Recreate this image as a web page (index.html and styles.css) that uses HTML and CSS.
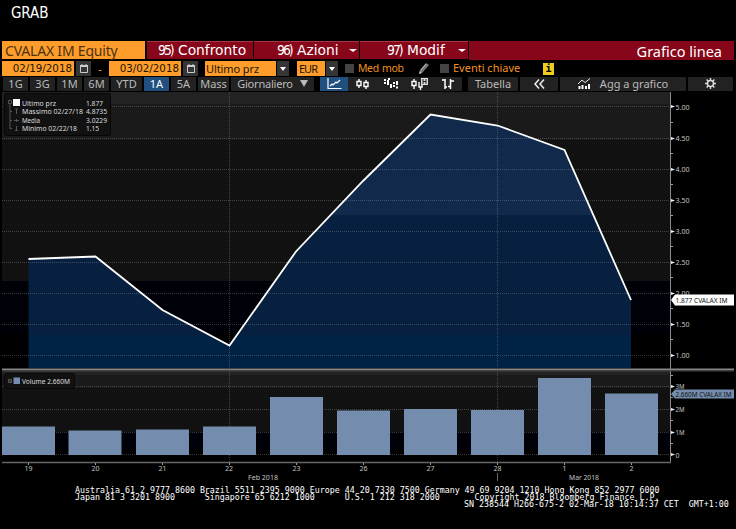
FILE: index.html
```html
<!DOCTYPE html>
<html lang="it">
<head>
  <meta charset="UTF-8" />
  <title>CVALAX IM Equity - Grafico linea</title>
  <link rel="stylesheet" href="styles.css">
</head>
<body>

  <header class="command">GRAB</header>

  <div class="menu-row">
    <div class="security">CVALAX IM Equity</div>
    <div class="menu confronto"><span class="num">95)</span><span>Confronto</span></div>
    <div class="menu azioni"><span class="num">96)</span><span>Azioni</span><i class="caret"></i></div>
    <div class="menu modif"><span class="num">97)</span><span>Modif</span><i class="caret"></i></div>
    <div class="page-title">Grafico linea</div>
  </div>

  <div class="filter-row">
    <div class="field date">02/19/2018</div>
    <div class="cal"><svg width="8" height="9" viewBox="0 0 8 9"><path d="M.5 2.5h7v6h-7zM2 0v2M6 0v2" fill="none" stroke="#ccc"/><path d="M0 1h8v2H0z" fill="#ccc"/></svg></div>
    <div class="dash">-</div>
    <div class="field date">03/02/2018</div>
    <div class="cal"><svg width="8" height="9" viewBox="0 0 8 9"><path d="M.5 2.5h7v6h-7zM2 0v2M6 0v2" fill="none" stroke="#ccc"/><path d="M0 1h8v2H0z" fill="#ccc"/></svg></div>
    <div class="field price">Ultimo prz</div>
    <div class="drop"><i class="caret"></i></div>
    <div class="field currency">EUR</div>
    <div class="drop"><i class="caret"></i></div>
    <i class="check"></i>
    <span class="check-label med">Med mob</span>
    <svg class="pencil" width="12" height="13" viewBox="0 0 12 13"><path d="M1 12l1-4 6-7 3 2-6 7z" fill="#777"/><path d="M3 8l5-6" stroke="#bbb"/><path d="M1 12l1-3 2 2z" fill="#ccc"/></svg>
    <i class="check"></i>
    <span class="check-label eventi">Eventi chiave</span>
    <span class="info">i</span>
  </div>

  <div class="range-row">
    <div class="range">1G</div>
    <div class="range">3G</div>
    <div class="range">1M</div>
    <div class="range">6M</div>
    <div class="range ytd">YTD</div>
    <div class="range active">1A</div>
    <div class="range">5A</div>
    <div class="range mass">Mass</div>
    <div class="range daily"><span>Giornaliero</span><i class="caret"></i></div>
    <div class="chart-types">
      <div class="type active"><svg width="15" height="12" viewBox="0 0 15 12"><path d="M1 0v10.500h13.500M3 8l2-2 1 1 3-3 1 1 3-3" fill="none" stroke="#fff" stroke-width="1.200"/></svg></div>
      <div class="type"><svg width="13" height="12" viewBox="0 0 13 12"><path d="M3 1v2M3 8v2M10 2v2M10 9v2M1 3.500h4v4H1zM8 4.500h4v4H8z" fill="none" stroke="#fff" stroke-width="1.400"/></svg></div>
      <div class="type"><svg width="16" height="12" viewBox="0 0 16 12"><path d="M5 2v5M8 6v4M14 3v4" stroke="#fff" stroke-width="2"/><path d="M1 2h2M1 5h2M5 1h2M10 5h2M10 8h2M13 9.500h2" stroke="#fff" stroke-width="2"/></svg></div>
      <div class="type"><svg width="17" height="12" viewBox="0 0 17 12"><path d="M3 1v2M3 8v3M1 3.500h4v4H1zM8 4v5h3V7M9.500 9v3" fill="none" stroke="#fff" stroke-width="1.400"/><path d="M10 0h7v7h-7z" fill="#ddd"/><path d="M12 1v5M15 1v5M12 3.500h3" stroke="#222"/></svg></div>
      <div class="type"><svg width="13" height="12" viewBox="0 0 13 12"><path d="M4 1v10M9.500 1v10M1 2h3M4 9h2M7 8.500h2M10 3h3" fill="none" stroke="#fff" stroke-width="1.500"/></svg></div>
    </div>
    <div class="range table">Tabella</div>
    <div class="range back"><svg width="11" height="10" viewBox="0 0 11 10"><path d="M5 .500L1 5l4 4.500M10 .500L6 5l4 4.500" fill="none" stroke="#eee" stroke-width="1.500"/></svg></div>
    <div class="range add"><svg width="13" height="11" viewBox="0 0 13 11"><path d="M0 6l4-4 3 2.500L12 .500" fill="none" stroke="#eee"/><path d="M1.500 8v3M4.500 7v4M8 8v3M11 6v5" stroke="#fff" stroke-width="2"/></svg><span>Agg a grafico</span></div>
    <div class="range gear"><svg width="11" height="11" viewBox="0 0 11 11"><circle cx="5.500" cy="5.500" r="3" fill="none" stroke="#ddd" stroke-width="1.500"/><path d="M5.500 0v2M5.500 9v2M0 5.500h2M9 5.500h2M1.600 1.600l1.400 1.400M8 8l1.400 1.400M9.400 1.600L8 3M3 8L1.600 9.400" stroke="#ddd" stroke-width="1.400"/></svg></div>
  </div>

  <svg class="chart" width="736" height="391" viewBox="0 92 736 391">
    <defs>
      <clipPath id="under-line"><path d="M28.500 368V259L95.500 256.500 162.500 310 229.500 345.500 296 251.500 363 181 430.500 114.500 497.500 125.500 564.500 150 631 300V368z"/></clipPath>
    </defs>

    <!-- price panel -->
    <rect x="2" y="92" width="668" height="12" fill="#222"/>
    <rect x="2" y="104" width="668" height="36" fill="#1a1a1a"/>
    <rect x="2" y="140" width="668" height="141" fill="#111"/>
    <rect x="2" y="281" width="668" height="52" fill="#000008"/>
    <g clip-path="url(#under-line)">
      <rect x="28" y="92" width="604" height="123" fill="#11294a"/>
      <rect x="28" y="215" width="604" height="120" fill="#07203f"/>
      <rect x="28" y="335" width="604" height="33" fill="#002244"/>
    </g>
    <path class="grid" d="M2 106.500H670M2 138.500H670M2 169.500H670M2 200.500H670M2 231.500H670M2 262.500H670M2 293.500H670M2 324.500H670M2 355.500H670M229.500 92V368M497.500 92V368"/>
    <polyline class="price-line" points="28.500,259 95.500,256.500 162.500,310 229.500,345.500 296,251.500 363,181 430.500,114.500 497.500,125.500 564.500,150 631,300"/>

    <!-- volume panel -->
    <rect x="2" y="371" width="668" height="4" fill="#222"/>
    <rect x="2" y="375" width="668" height="13" fill="#1a1a1a"/>
    <rect x="2" y="388" width="668" height="44" fill="#111"/>
    <rect x="2" y="432" width="668" height="17" fill="#000008"/>
    <path class="grid" d="M2 386.500H670M2 409.500H670M2 432.500H670M2 454.500H670M229.500 371V463M497.500 371V463"/>
    <g class="bars">
      <rect x="2" y="426.500" width="53" height="28.500"/>
      <rect x="68.500" y="430.500" width="53" height="24.500"/>
      <rect x="136" y="429.500" width="53" height="25.500"/>
      <rect x="203" y="426.500" width="53" height="28.500"/>
      <rect x="270" y="397" width="53" height="58"/>
      <rect x="337" y="410.500" width="53" height="44.500"/>
      <rect x="404" y="409" width="53" height="46"/>
      <rect x="471" y="410" width="53" height="45"/>
      <rect x="538" y="378" width="53" height="77"/>
      <rect x="605" y="393.500" width="53" height="61.500"/>
    </g>

    <!-- axes -->
    <path d="M670.500 92V463" stroke="#8a8a8a"/>
    <path d="M2 369.500H734" stroke="#85858a" stroke-width="2"/>
    <path d="M2 371H734" stroke="#444"/>
    <path d="M2 462.500H671" stroke="#666" stroke-width="1.500"/>
    <path class="tick" d="M671 122.500h2M671 153.500h2M671 184.500h2M671 215.500h2M671 246.500h2M671 277.500h2M671 308.500h2M671 339.500h2M671 375.500h2M671 397.500h2M671 420.500h2M671 443.500h2"/>
    <path class="tick" d="M28.500 463v2M95.500 463v2M162.500 463v2M229.500 463v2M296.500 463v2M363.500 463v2M430.500 463v2M497.500 463v2M564.500 463v2M631.500 463v2"/>
    <path d="M497.500 473V481" stroke="#666"/>
    <path fill="#eee" d="M671 105l4 1.500-4 1.500zM671 137l4 1.500-4 1.500zM671 168l4 1.500-4 1.500zM671 199l4 1.500-4 1.500zM671 230l4 1.500-4 1.500zM671 261l4 1.500-4 1.500zM671 292l4 1.500-4 1.500zM671 323l4 1.500-4 1.500zM671 354l4 1.500-4 1.500zM671 385l4 1.500-4 1.500zM671 408l4 1.500-4 1.500zM671 431l4 1.500-4 1.500zM671 453l4 1.500-4 1.500z"/>
    <g class="axis-text">
      <text x="675.500" y="109.500" textLength="14" lengthAdjust="spacingAndGlyphs">5.00</text>
      <text x="675.500" y="141" textLength="14" lengthAdjust="spacingAndGlyphs">4.50</text>
      <text x="675.500" y="172" textLength="14" lengthAdjust="spacingAndGlyphs">4.00</text>
      <text x="675.500" y="203" textLength="14" lengthAdjust="spacingAndGlyphs">3.50</text>
      <text x="675.500" y="234" textLength="14" lengthAdjust="spacingAndGlyphs">3.00</text>
      <text x="675.500" y="265" textLength="14" lengthAdjust="spacingAndGlyphs">2.50</text>
      <text x="675.500" y="296" textLength="14" lengthAdjust="spacingAndGlyphs">2.00</text>
      <text x="675.500" y="327" textLength="14" lengthAdjust="spacingAndGlyphs">1.50</text>
      <text x="675.500" y="358" textLength="14" lengthAdjust="spacingAndGlyphs">1.00</text>
      <text x="675.500" y="389" textLength="9" lengthAdjust="spacingAndGlyphs">3M</text>
      <text x="675.500" y="412" textLength="9" lengthAdjust="spacingAndGlyphs">2M</text>
      <text x="675.500" y="435" textLength="9" lengthAdjust="spacingAndGlyphs">1M</text>
      <text x="675.500" y="457.500">0</text>
    </g>
    <g class="axis-text days">
      <text x="28.500" y="471">19</text>
      <text x="95.500" y="471">20</text>
      <text x="162.500" y="471">21</text>
      <text x="229" y="471">22</text>
      <text x="296.500" y="471">23</text>
      <text x="363.500" y="471">26</text>
      <text x="430.500" y="471">27</text>
      <text x="497.500" y="471">28</text>
      <text x="564.500" y="471">1</text>
      <text x="631.500" y="471">2</text>
      <text x="263" y="479.500" textLength="30" lengthAdjust="spacingAndGlyphs">Feb 2018</text>
      <text x="584" y="479.500" textLength="30" lengthAdjust="spacingAndGlyphs">Mar 2018</text>
    </g>

    <!-- last value flags -->
    <path d="M671 300l4-5.500h59v11h-59z" fill="#fff"/>
    <text class="flag" x="675.500" y="302.500" textLength="52" lengthAdjust="spacingAndGlyphs">1.877 CVALAX IM</text>
    <path d="M671 394l4-4.500h59v9h-59z" fill="#748dae"/>
    <text class="flag" x="675.500" y="396.500" textLength="56" lengthAdjust="spacingAndGlyphs">2.660M CVALAX IM</text>

    <!-- legends -->
    <rect x="4.500" y="93.500" width="106" height="42" rx="2" fill="#111" stroke="#060606"/>
    <path d="M8.500 100.500h3v3h-3zM10 104v24.500h2M10 111.500h2M10 120.500h2M15 109h3M16.500 109v5M14 120.500h5M16.500 119v3M16.500 126v5M15 130.500h3" fill="none" stroke="#555"/>
    <rect x="13" y="99" width="7" height="7" fill="#fff"/>
    <g class="legend">
      <text x="22" y="105.500" textLength="34" lengthAdjust="spacingAndGlyphs">Ultimo prz</text>
      <text x="22" y="114" textLength="61" lengthAdjust="spacingAndGlyphs">Massimo 02/27/18</text>
      <text x="22" y="122.500" textLength="18" lengthAdjust="spacingAndGlyphs">Media</text>
      <text x="22" y="131" textLength="55" lengthAdjust="spacingAndGlyphs">Minimo 02/22/18</text>
      <text x="86" y="105.500" textLength="17" lengthAdjust="spacingAndGlyphs">1.877</text>
      <text x="86" y="114" textLength="21" lengthAdjust="spacingAndGlyphs">4.8735</text>
      <text x="86" y="122.500" textLength="21" lengthAdjust="spacingAndGlyphs">3.0229</text>
      <text x="86" y="131" textLength="13" lengthAdjust="spacingAndGlyphs">1.15</text>
    </g>
    <rect x="4.500" y="373.500" width="70" height="15" rx="2" fill="#111" stroke="#080808"/>
    <path d="M8.500 379.500h3v3h-3z" fill="#333" stroke="#555"/>
    <rect x="13.500" y="377.500" width="6.500" height="6.500" fill="#748dae"/>
    <g class="legend">
      <text x="22" y="384" textLength="48" lengthAdjust="spacingAndGlyphs">Volume 2.660M</text>
    </g>
  </svg>

<pre class="footer">Australia 61 2 9777 8600 Brazil 5511 2395 9000 Europe 44 20 7330 7500 Germany 49 69 9204 1210 Hong Kong 852 2977 6000
Japan 81 3 3201 8900      Singapore 65 6212 1000      U.S. 1 212 318 2000       Copyright 2018 Bloomberg Finance L.P.
<span class="serial">SN 238544 H266-675-2 02-Mar-18 10:14:37 CET  GMT+1:00</span></pre>

</body>
</html>
```
FILE: styles.css
```css
* {
  box-sizing: border-box;
}

body {
  margin: 0;
  width: 736px;
  height: 529px;
  overflow: hidden;
  background: #000;
  color: #fff;
  font-family: "Noto Sans", "Open Sans", sans-serif;
  white-space: nowrap;
}

svg {
  display: block;
  flex: none;
}

.command {
  height: 41px;
  padding: 2px 0 0 11px;
  font-family: "DejaVu Sans Condensed", "DejaVu Sans", sans-serif;
  font-size: 15px;
  font-stretch: condensed;
  line-height: 22px;
  letter-spacing: -0.1px;
}

.menu-row {
  display: flex;
  gap: 1px;
  height: 19px;
  padding-left: 2px;
  line-height: 18px;
}

.security {
  width: 143px;
  height: 18px;
  margin-right: 1px;
  padding: 1px 0 0 3px;
  background: #ff9d2c;
  color: #4a3210;
  font-size: 14px;
  letter-spacing: -0.2px;
}

.menu {
  display: flex;
  align-items: center;
  width: 106px;
  height: 18px;
  padding-left: 11px;
  background: #870619;
  border-top: 1px solid #a83444;
  font-family: "DejaVu Sans", sans-serif;
  font-size: 13.8px;
}

.menu > span {
  margin-top: -2px;
}

.menu.azioni {
  width: 105px;
  padding-left: 23px;
}

.menu.modif {
  width: 108px;
  padding-left: 27px;
}

.num {
  width: 20px;
  font-family: "DejaVu Sans Condensed", sans-serif;
  letter-spacing: -2px;
}

.caret {
  border: 4px solid transparent;
  border-top-color: #fff;
  border-bottom: 0;
}

.menu .caret {
  margin: 0 2px 0 auto;
  border-top-width: 3px;
}

.page-title {
  flex: 1;
  height: 19px;
  margin-right: 2px;
  padding: 1px 12px 0 0;
  background: #870619;
  font-size: 14.5px;
  text-align: right;
}

.filter-row {
  display: flex;
  align-items: center;
  height: 17px;
  padding-left: 2px;
  font-size: 11px;
}

.field {
  height: 15px;
  background: #ff9d2c;
  color: #241500;
  line-height: 15px;
}

.date {
  width: 72px;
  padding-right: 2px;
  font-family: "DejaVu Sans", sans-serif;
  font-size: 10.3px;
  text-align: right;
}

.cal {
  display: flex;
  align-items: center;
  justify-content: center;
  width: 15px;
  height: 15px;
  margin-left: 2px;
  background: #353535;
}

.dash {
  width: 18px;
  text-align: center;
  color: #ff9d2c;
}

.price {
  width: 71px;
  margin-left: 7px;
  padding-left: 1px;
  letter-spacing: -0.1px;
}

.currency {
  width: 28px;
  margin-left: 8px;
  padding-left: 2px;
  letter-spacing: -1px;
}

.drop {
  display: flex;
  align-items: center;
  justify-content: center;
  width: 12px;
  height: 15px;
  margin-left: 1px;
  background: #353535;
}

.drop .caret {
  border-width: 4px 3px 0;
}

.check {
  width: 9px;
  height: 9px;
  margin-left: 7px;
  background: #444;
}

.check-label {
  margin: -2px 0 0 4px;
  color: #f29022;
}

.med {
  width: 60px;
  font-size: 10.5px;
  letter-spacing: -0.4px;
  word-spacing: 1px;
}

.pencil {
  margin-right: 3px;
}

.eventi {
  width: 90px;
}

.info {
  width: 11px;
  height: 12px;
  background: #f0cc20;
  color: #000;
  font: bold 10px/12px "DejaVu Sans Mono", monospace;
  text-align: center;
}

.range-row {
  display: flex;
  gap: 2px;
  height: 15px;
  padding-left: 3px;
  color: #bbb;
  font-size: 11px;
  line-height: 12px;
}

.range {
  display: flex;
  align-items: center;
  justify-content: center;
  width: 25px;
  height: 14px;
  padding-bottom: 1px;
  background: #222;
}

.range.active,
.type.active {
  background: #205080;
  color: #fff;
}

.ytd {
  width: 31px;
}

.mass {
  width: 31px;
}

.daily {
  width: 83px;
  letter-spacing: -0.2px;
}

.daily .caret {
  margin-left: 7px;
  border-width: 7px 4px 0;
  border-top-color: #bbb;
}

.chart-types {
  display: flex;
  width: 142px;
  height: 14px;
  margin-left: 4px;
  background: #222;
}

.type {
  display: flex;
  flex: 1;
  align-items: center;
  justify-content: center;
}

.table {
  width: 50px;
  margin-left: 4px;
}

.back {
  width: 38px;
}

.add {
  width: 126px;
}

.add span {
  margin-left: 9px;
}

.gear {
  width: 45px;
}

.grid {
  fill: none;
  stroke: #aaa;
  stroke-opacity: 0.32;
  stroke-dasharray: 1 1;
}

.price-line {
  fill: none;
  stroke: #fff;
  stroke-width: 1.8;
}

.bars rect {
  fill: #748dae;
}

.tick {
  stroke: #999;
}

.axis-text,
.flag,
.legend {
  font-size: 7px;
}

.axis-text {
  fill: #c4c4c4;
}

.days {
  text-anchor: middle;
}

.flag {
  fill: #111;
}

.legend {
  fill: #ddd;
}

.footer {
  margin: 4px 0 0 75px;
  font-family: "DejaVu Sans Mono", monospace;
  font-size: 8.3px;
  line-height: 7px;
}

.serial {
  margin-left: 389px;
}
```
